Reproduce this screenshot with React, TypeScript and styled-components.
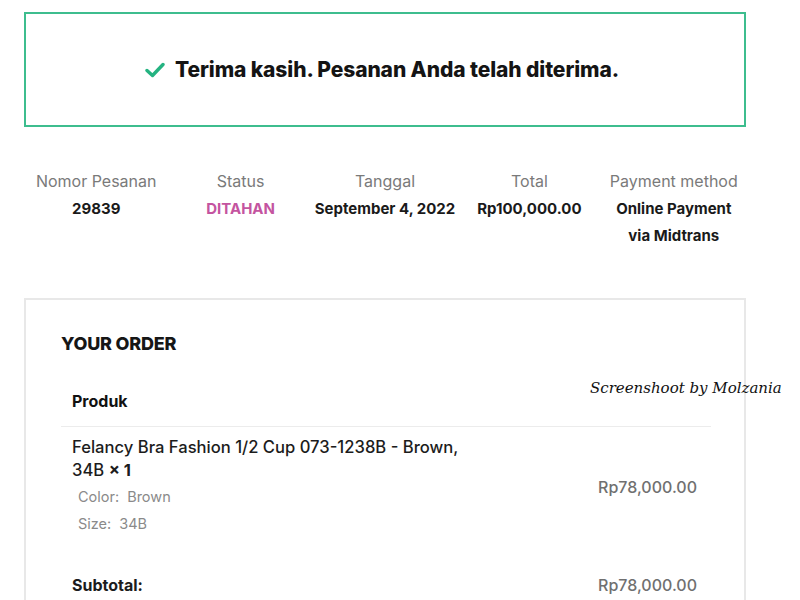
import React from "react";
import styled, { createGlobalStyle } from "styled-components";

const Global = createGlobalStyle`
  html, body { margin: 0; padding: 0; background: #ffffff; overflow: hidden; }
  body { font-family: Inter, "Noto Sans", sans-serif; color: #111; }
`;

const Page = styled.div`
  width: 722px;
  padding: 12px 0 0 24px;
  display: flex;
  flex-direction: column;
  position: relative;
`;

const Notice = styled.div`
  height: 111px;
  border: 2px solid #3dbd8e;
  display: flex;
  align-items: center;
  justify-content: center;
  gap: 10px;
  padding-right: 6px;
  font-size: 21px;
  font-weight: 800;
  letter-spacing: -0.1px;
  color: #141414;
`;

const Overview = styled.div`
  display: grid;
  grid-template-columns: repeat(5, 1fr);
  margin-top: 40px;
  height: 131px;
`;

const OverviewItem = styled.div`
  display: flex;
  flex-direction: column;
  align-items: center;
  text-align: center;
`;

const Label = styled.div`
  font-size: 16px;
  color: #7a7a7a;
  line-height: 28px;
`;

const Value = styled.div<{ $accent?: boolean }>`
  font-size: 15px;
  font-weight: 700;
  line-height: 27px;
  color: ${(p) => (p.$accent ? "#c454a0" : "#1a1a1a")};
`;

const OrderBox = styled.div`
  border: 2px solid #e8e8e8;
  border-bottom: none;
  padding: 31px 35px 0 35px;
  height: 320px;
`;

const OrderTitle = styled.h2`
  margin: 0;
  font-size: 18px;
  font-weight: 800;
  color: #161616;
  line-height: 26px;
  letter-spacing: -0.2px;
`;

const Table = styled.div`
  margin-top: 18px;
  width: 650px;
`;

const HeadRow = styled.div`
  padding: 0 11px;
  height: 51px;
  display: flex;
  align-items: center;
  font-size: 16px;
  font-weight: 700;
  border-bottom: 1px solid #ececec;
`;

const ItemRow = styled.div`
  display: flex;
  align-items: center;
  justify-content: space-between;
  padding: 9px 14px 0 11px;
`;

const ItemInfo = styled.div`
  display: flex;
  flex-direction: column;
`;

const ItemName = styled.div`
  font-size: 16.6px;
  font-weight: 500;
  line-height: 23px;
  color: #1c1c1c;
  width: 400px;
  margin-bottom: 1px;
`;

const Qty = styled.strong`
  font-weight: 700;
`;

const Meta = styled.div`
  font-size: 14.5px;
  color: #8a8a8a;
  line-height: 27px;
  padding-left: 6px;
  display: flex;
  gap: 8px;
`;

const Price = styled.div`
  font-size: 16px;
  color: #707070;
  font-weight: 500;
`;

const TotalRow = styled.div`
  display: flex;
  justify-content: space-between;
  align-items: center;
  padding: 38px 14px 0 11px;
  font-size: 16px;
`;

const TotalLabel = styled.div`
  font-weight: 700;
  color: #1c1c1c;
`;

const Watermark = styled.div`
  position: absolute;
  left: 590px;
  top: 379px;
  white-space: nowrap;
  font-family: "DejaVu Serif", serif;
  font-style: italic;
  font-size: 15px;
  color: #111;
`;

const CheckIcon = () => (
  <svg width="20" height="16" viewBox="0 0 20 16" fill="none">
    <path d="M2 8.5 L7.5 13.5 L18 2.5" stroke="#24b381" strokeWidth="3.4" strokeLinecap="round" strokeLinejoin="round" />
  </svg>
);

export default function App() {
  const info = [
    { label: "Nomor Pesanan", value: ["29839"] },
    { label: "Status", value: ["DITAHAN"], accent: true },
    { label: "Tanggal", value: ["September 4, 2022"] },
    { label: "Total", value: ["Rp100,000.00"] },
    { label: "Payment method", value: ["Online Payment", "via Midtrans"] },
  ];
  return (
    <>
      <Global />
      <Page>
        <Notice>
          <CheckIcon />
          <span>Terima kasih. Pesanan Anda telah diterima.</span>
        </Notice>
        <Overview>
          {info.map((i) => (
            <OverviewItem key={i.label}>
              <Label>{i.label}</Label>
              {i.value.map((v) => (
                <Value key={v} $accent={i.accent}>{v}</Value>
              ))}
            </OverviewItem>
          ))}
        </Overview>
        <OrderBox>
          <OrderTitle>YOUR ORDER</OrderTitle>
          <Table>
            <HeadRow>Produk</HeadRow>
            <ItemRow>
              <ItemInfo>
                <ItemName>
                  Felancy Bra Fashion 1/2 Cup 073-1238B - Brown, 34B <Qty>× 1</Qty>
                </ItemName>
                <Meta><span>Color:</span><span>Brown</span></Meta>
                <Meta><span>Size:</span><span>34B</span></Meta>
              </ItemInfo>
              <Price>Rp78,000.00</Price>
            </ItemRow>
            <TotalRow>
              <TotalLabel>Subtotal:</TotalLabel>
              <Price>Rp78,000.00</Price>
            </TotalRow>
          </Table>
        </OrderBox>
        <Watermark>Screenshoot by Molzania</Watermark>
      </Page>
    </>
  );
}
